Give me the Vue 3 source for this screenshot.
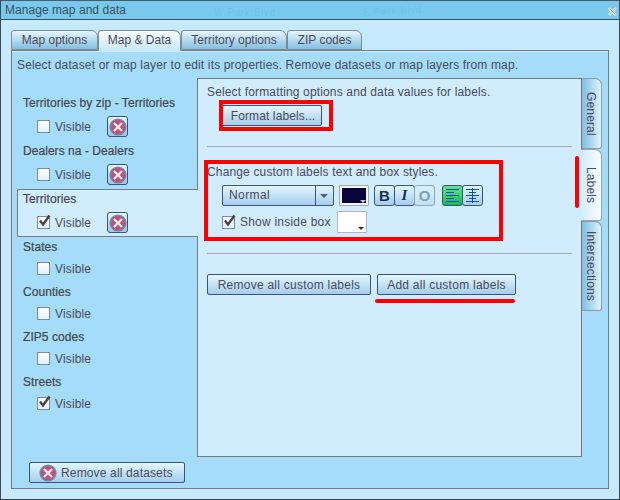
<script setup>
const tabs = [
  { label: 'Map options', w: 87 },
  { label: 'Map & Data', w: 83, active: true },
  { label: 'Territory options', w: 106 },
  { label: 'ZIP codes', w: 75 }
]
const layers = [
  { name: 'Territories by zip - Territories', del: true },
  { name: 'Dealers na - Dealers', del: true },
  { name: 'Territories', del: true, checked: true, selected: true },
  { name: 'States' },
  { name: 'Counties' },
  { name: 'ZIP5 codes' },
  { name: 'Streets', checked: true }
]
const sideTabs = [
  { label: 'General', h: 71 },
  { label: 'Labels', h: 72, active: true },
  { label: 'Intersections', h: 90 }
]
</script>

<template>
  <div class="window">
    <header class="titlebar">
      <span class="title">Manage map and data</span>
      <span class="street s1">W Park Blvd</span>
      <span class="street s2">E Park Blvd</span>
      <svg class="close" width="9" height="9" viewBox="0 0 9 9">
        <path d="M1 1 8 8M8 1 1 8" stroke="#fff" stroke-width="2.2" />
        <path d="M1.500 1.500 7.500 7.500M7.500 1.500 1.500 7.500" stroke="#44606f" stroke-width=".6" />
      </svg>
    </header>

    <nav class="tabs">
      <button v-for="t in tabs" :key="t.label" class="tab" :class="{ active: t.active }" :style="{ width: t.w + 'px' }">{{ t.label }}</button>
    </nav>

    <main class="content">
      <p class="intro">Select dataset or map layer to edit its properties. Remove datasets or map layers from map.</p>

      <div class="columns">
        <aside class="layers">
          <section v-for="l in layers" :key="l.name" class="layer" :class="{ selected: l.selected, tall: l.del }">
            <h3>{{ l.name }}</h3>
            <div class="visible">
              <span class="check">
                <svg v-if="l.checked" width="15" height="14" viewBox="0 0 15 14"><path d="M3 6.500 6 10.500 12.500 1.500" fill="none" stroke="#444" stroke-width="2.400" /></svg>
              </span>
              <span>Visible</span>
              <button v-if="l.del" class="del">
                <svg width="18" height="18" viewBox="0 0 18 18">
                  <circle cx="9" cy="9" r="7.800" fill="#c24f78" stroke="#6d8aa8" stroke-width="1.600" />
                  <path d="M5 5 13 13M13 5 5 13" stroke="#f4e8ee" stroke-width="2.400" />
                </svg>
              </button>
            </div>
          </section>
        </aside>

        <div class="panelwrap">
          <div class="panel">
            <section class="block b1">
              <p>Select formatting options and data values for labels.</p>
              <button class="btn format">Format labels...</button>
            </section>
            <section class="block b2">
              <p>Change custom labels text and box styles.</p>
              <div class="tools">
                <div class="select"><span class="val">Normal</span><span class="arrow"></span></div>
                <span class="swatch dark"><i></i></span>
                <div class="group">
                  <button class="tool b">B</button>
                  <button class="tool i">I</button>
                  <button class="tool o">O</button>
                </div>
                <div class="group aligns">
                  <button class="tool on">
                    <svg width="15" height="15" viewBox="0 0 15 15"><path d="M1 1.500H14M1 4.500H9M1 7.500H14M1 10.500H9M1 13.500H14" stroke="#0b4db0" /></svg>
                  </button>
                  <button class="tool">
                    <svg width="15" height="15" viewBox="0 0 15 15"><path d="M1 1.500H14M4 4.500H11M1 7.500H14M4 10.500H11M1 13.500H14M7.500 0V15" stroke="#0b4db0" /></svg>
                  </button>
                </div>
              </div>
              <div class="inside">
                <span class="check">
                  <svg width="15" height="14" viewBox="0 0 15 14"><path d="M3 6.500 6 10.500 12.500 1.500" fill="none" stroke="#444" stroke-width="2.400" /></svg>
                </span>
                <span class="insidelabel">Show inside box</span>
                <span class="swatch white"><i></i></span>
              </div>
            </section>
            <section class="block b3">
              <button class="btn rm">Remove all custom labels</button>
              <button class="btn add">Add all custom labels</button>
            </section>

            <div class="mark m1"></div>
            <div class="mark m2"></div>
            <div class="line l1"></div>
            <div class="line l2"></div>
          </div>

          <div class="sidetabs">
            <div v-for="s in sideTabs" :key="s.label" class="sidetab" :class="{ active: s.active }" :style="{ height: s.h + 'px' }"><span>{{ s.label }}</span></div>
          </div>
        </div>
      </div>

      <footer class="foot">
        <button class="btn removeall">
          <svg width="18" height="18" viewBox="0 0 18 18">
            <circle cx="9" cy="9" r="7.800" fill="#c24f78" stroke="#6d8aa8" stroke-width="1.600" />
            <path d="M5 5 13 13M13 5 5 13" stroke="#f4e8ee" stroke-width="2.400" />
          </svg>
          <span>Remove all datasets</span>
        </button>
      </footer>
    </main>
  </div>
</template>

<style>
html, body { margin: 0; background: #c6e9fb; }
</style>

<style scoped>
* { box-sizing: border-box; }
p, h3 { margin: 0; font-weight: normal; }
button { font: inherit; color: inherit; padding: 0; }

.window {
  width: 620px; height: 500px; overflow: hidden; position: relative;
  display: flex; flex-direction: column;
  background: #c6e9fb;
  border: 1px solid #3b4a58; border-top-color: #4a5a66; border-bottom-color: #33424e;
  font: 12px/14px "Liberation Sans", Arial, sans-serif;
  letter-spacing: .15px;
  color: #4b4a5c;
}
.titlebar {
  height: 19px; flex: none; position: relative; overflow: hidden;
  background: #79c9ef;
  border-bottom: 1px solid #34546a;
  padding: 2px 0 0 4px;
}
.title { color: #3b4f58; letter-spacing: .05px; }
.street { position: absolute; line-height: 10px; font-size: 10px; color: #70c2ea; letter-spacing: .6px; }
.s1 { left: 213px; top: 7px; }
.s2 { left: 362px; top: 5px; transform: rotate(-3deg); }
.close { position: absolute; right: 2px; top: 6px; }

.tabs { height: 30px; flex: none; padding: 10px 0 0 10px; display: flex; align-items: flex-end; position: relative; z-index: 1; }
.tab {
  height: 20px; border: 1px solid #7d8b94; border-radius: 3px 7px 0 0;
  background: linear-gradient(#e6f6fe, #84bfe2);
  color: #4b4a5c; line-height: 17px; text-align: center;
}
.tab.active { background: linear-gradient(#f8fcff, #c9e9fb); border-bottom-color: #cdebfc; height: 21px; margin-bottom: -1px; }

.content {
  margin: 0 10px; height: 439px; flex: none;
  border: 1px solid #7a7a7a;
  background: #a4dcfa;
  display: flex; flex-direction: column;
  box-shadow: inset 0 1px 0 #cdebfc;
}
.intro { padding: 7px 0 0 5px; height: 27px; }

.columns { display: flex; height: 379px; padding-left: 5px; flex: none; }
.layers { width: 180px; padding-top: 15px; flex: none; position: relative; z-index: 1; }
.layer { height: 45px; padding: 1px 0 0 5px; border: 1px solid transparent; border-right: 0; }
.layer.tall { height: 48px; }
.layer h3 { color: #44454c; letter-spacing: .05px; font-size: 12px; height: 19px; line-height: 16px; -webkit-text-stroke: .2px #44454c; }
.layer.tall h3 { height: 21px; }
.layer.selected { background: #d1edfd; border-color: #7a7a7a; border-radius: 2px 0 0 2px; margin-right: -1px; }
.visible { display: flex; align-items: center; padding-left: 14px; height: 21px; gap: 5px; }
.check {
  width: 13px; height: 13px; flex: none; display: block; position: relative;
  background: linear-gradient(#fff, #e2f1fa);
  border: 1px solid #7b8c9b;
}
.check svg { position: absolute; left: -1px; top: -3px; }
.del {
  width: 21px; height: 21px; margin-left: 11px; flex: none; display: flex; align-items: center; justify-content: center;
  border: 1px solid #3d5478; border-radius: 3px;
  background: linear-gradient(#e8f8ff, #9fc7e8);
}

.panelwrap { width: 405px; flex: none; display: flex; height: 379px; }
.panel {
  width: 385px; height: 379px; flex: none; position: relative;
  background: #d1edfd;
  border: 1px solid #7a7a7a;
  padding: 0 9px;
}
.block { border-bottom: 1px solid #a6aeb3; }
.b1 { height: 68px; padding-top: 6px; }
.b2 { height: 107px; padding-top: 18px; }
.b3 { border: 0; padding-top: 20px; display: flex; gap: 6px; }

.btn {
  height: 21px; border: 1px solid #3d5478; border-radius: 2px;
  background: linear-gradient(#e2f7ff, #a6cdec);
  color: #4b4a5c; display: block; line-height: 19px; letter-spacing: .25px;
  padding-top: 1px;
}
.format { width: 100px; margin: 6px 0 0 15px; padding-left: 2px; letter-spacing: .12px; }
.rm { width: 164px; }
.add { width: 139px; }

.tools { display: flex; align-items: center; margin: 5px 0 0 15px; height: 22px; }
.select {
  width: 112px; height: 21px; display: flex; border: 1px solid #3d5478; border-radius: 2px;
  background: linear-gradient(#e2f7ff, #a6cdec);
}
.val { flex: 1; padding: 2px 0 0 6px; border-right: 1px solid #3d5478; letter-spacing: .42px; }
.arrow { width: 17px; position: relative; }
.arrow::after {
  content: ""; position: absolute; left: 4px; top: 8px;
  border: 4px solid transparent; border-top: 4px solid #555c66; border-bottom: 0;
}
.swatch { display: block; border: 1px solid #b4b4b4; background: #fff; position: relative; flex: none; border-radius: 1px; }
.swatch.dark { width: 30px; height: 21px; margin: 0 5px; padding: 2px; border-color: #a8a8a8; background: #eef6fa; }
.swatch.dark::before { content: ""; display: block; height: 100%; background: #07053a; }
.swatch.white { width: 30px; height: 22px; margin-left: 6px; }
.swatch i {
  position: absolute; right: 2px; bottom: 2px;
  border: 3px solid transparent; border-top: 3px solid #333; border-bottom: 0;
}
.swatch.dark i { border-top-color: #c8c8c8; }
.group { display: flex; }
.tool {
  width: 21px; height: 21px; margin-left: -1px; display: flex; align-items: center; justify-content: center;
  border: 1px solid #3d5478; border-radius: 3px;
  background: linear-gradient(#e2f7ff, #a6cdec);
}
.group .tool:first-child { margin-left: 0; }
.tool.b, .tool.o { font: bold 15px "Liberation Sans", sans-serif; color: #16314f; letter-spacing: 0; }
.tool.i { font: italic bold 15px "Liberation Serif", serif; color: #16314f; letter-spacing: 0; }
.tool.o { color: #7fa0b3; border-color: #8ba6bf; background: linear-gradient(#d9f0fb, #c3e0f4); }
.aligns { margin-left: 7px; }
.tool.on { background: linear-gradient(#5fe68b, #17b858); }
.inside { display: flex; align-items: center; margin: 5px 0 0 15px; height: 22px; }
.insidelabel { margin-left: 5px; letter-spacing: .22px; }

.mark { position: absolute; border: 4px solid #f00; pointer-events: none; }
.m1 { left: 21px; top: 21px; width: 114px; height: 31px; }
.m2 { left: 6px; top: 81px; width: 299px; height: 81px; }
.line { position: absolute; background: #f00; border-radius: 2px; }
.l1 { left: 177px; top: 220px; width: 140px; height: 4px; }
.l2 { left: 377px; top: 77px; width: 4px; height: 52px; }

.sidetabs { width: 21px; flex: none; margin-left: -1px; }
.sidetab {
  width: 21px; border: 1px solid #8b9aa4; border-left: 0; border-radius: 0 7px 3px 0;
  background: linear-gradient(90deg, #7db9df, #dff3fd);
  display: flex; align-items: center; justify-content: center;
}
.sidetab span { writing-mode: vertical-rl; line-height: 18px; letter-spacing: .15px; }
.sidetab.active { background: linear-gradient(90deg, #d1edfd, #f8fcff); position: relative; border-color: #9aa5ad; }

.foot { padding: 5px 0 0 17px; }
.removeall { width: 156px; display: flex; align-items: center; padding: 0 0 0 9px; gap: 4px; height: 21px; letter-spacing: .15px; }
.removeall span { position: relative; top: 1px; }
</style>
